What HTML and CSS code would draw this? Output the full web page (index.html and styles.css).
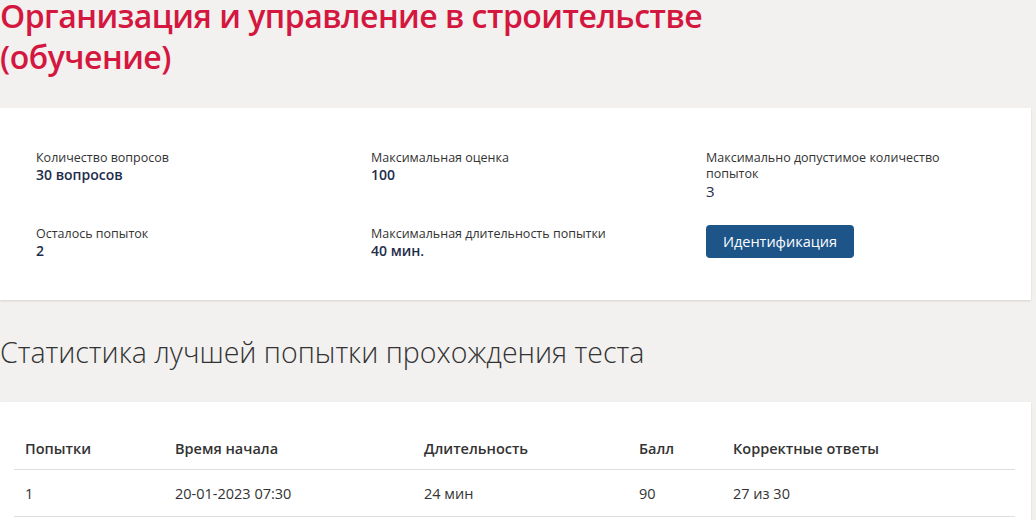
FILE: index.html
```html
<!DOCTYPE html>
<html lang="ru">
<head>
<meta charset="utf-8">
<link rel="stylesheet" href="styles.css">
</head>
<body>
<div class="page">
  <h1 class="title">Организация и управление в строительстве<br>(обучение)</h1>
  <section class="card info">
    <div class="stat">
      <div class="label">Количество вопросов</div>
      <div class="value">30 вопросов</div>
    </div>
    <div class="stat">
      <div class="label">Максимальная оценка</div>
      <div class="value">100</div>
    </div>
    <div class="stat">
      <div class="label">Максимально допустимое количество<br>попыток</div>
      <div class="value plain">3</div>
    </div>
    <div class="stat">
      <div class="label">Осталось попыток</div>
      <div class="value">2</div>
    </div>
    <div class="stat">
      <div class="label">Максимальная длительность попытки</div>
      <div class="value">40 мин.</div>
    </div>
    <div class="stat">
      <button class="btn">Идентификация</button>
    </div>
  </section>
  <h2 class="subtitle">Статистика лучшей попытки прохождения теста</h2>
  <section class="card tablecard">
    <table class="stats">
      <thead>
        <tr><th class="c1">Попытки</th><th class="c2">Время начала</th><th class="c3">Длительность</th><th class="c4">Балл</th><th class="c5">Корректные ответы</th></tr>
      </thead>
      <tbody>
        <tr><td>1</td><td>20-01-2023 07:30</td><td>24 мин</td><td>90</td><td>27 из 30</td></tr>
      </tbody>
    </table>
  </section>
</div>
</body>
</html>
```
FILE: styles.css
```css
html, body { margin: 0; padding: 0; }
body {
  background: #f2f1ef;
  font-family: "Open Sans", "Noto Sans", sans-serif;
  color: #333;
  width: 1036px;
  height: 520px;
  overflow: hidden;
}
.page { padding: 0 5px 0 0; }
.title {
  margin: 0;
  margin-top: -5px;
  font-size: 32px;
  line-height: 41px;
  font-weight: 600;
  letter-spacing: -0.5px;
  color: #d4173f;
}
.card {
  background: #fff;
  box-shadow: 0 1px 2px rgba(0,0,0,0.12);
}
.info {
  margin-top: 31px;
  height: 192px;
  box-sizing: border-box;
  padding: 42px 0 0 36px;
  display: grid;
  grid-template-columns: 335px 335px 300px;
  grid-template-rows: 76px auto;
}
.label { font-size: 12.5px; line-height: 16px; color: #333; }
.value { font-size: 14px; line-height: 18px; font-weight: 600; color: #1e2d4a; }
.value.plain { font-weight: 400; font-size: 15px; }
.btn {
  margin-top: -8px;
  width: 148px;
  height: 33px;
  border: 0;
  border-radius: 4px;
  background: #1d5589;
  color: #fff;
  font-family: "Open Sans", sans-serif;
  font-size: 14.5px;
  padding: 0;
}
.stat:nth-child(6) { padding-top: 4px; }
.subtitle {
  margin: 33px 0 0 0;
  font-size: 28.5px;
  line-height: 38px;
  font-weight: 300;
  color: #333;
}
.tablecard {
  margin-top: 31px;
  padding: 28px 16px 0 14px;
  height: 200px;
}
.stats { width: 100%; border-collapse: collapse; }
.stats th {
  text-align: left;
  font-size: 14.5px;
  font-weight: 600;
  padding: 9px 11px 11px 11px;
  border-bottom: 1px solid #dedede;
}
.stats td {
  font-size: 14.5px;
  padding: 14px 11px 13px 11px;
  border-bottom: 1px solid #dedede;
}
.c1 { width: 128px; }
.c2 { width: 227px; }
.c3 { width: 193px; }
.c4 { width: 72px; }
```
